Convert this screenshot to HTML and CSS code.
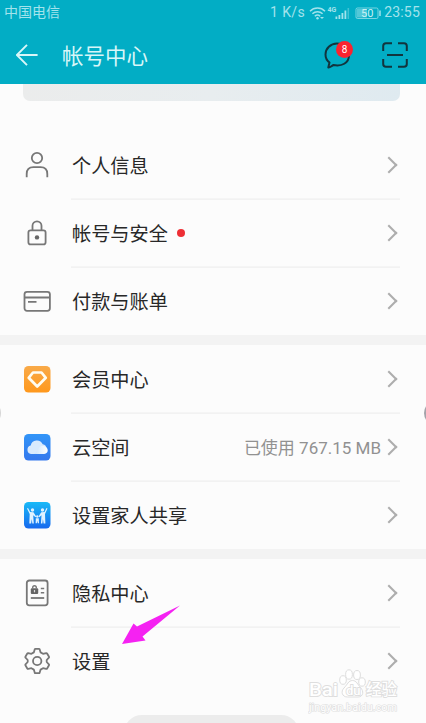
FILE: index.html
```
<!DOCTYPE html>
<html lang="zh-CN">

<head>
    <meta charset="UTF-8">
    <meta name="viewport" content="width=device-width, initial-scale=1.0">
    <title>帐号中心</title>
    <link rel="stylesheet" href="styles.css">
</head>

<body>
    <div class="phone">
        <header class="header">
            <div class="status-bar">
                <span class="carrier">中国电信</span>
                <span class="speed">1 K/s</span>
                <svg class="status-icons" width="74" height="16" viewBox="0 0 74 16">
                    <g fill="none" stroke="currentColor" stroke-width="1.5">
                        <path d="M1 6.2a10.5 10.5 0 0 1 15 0M3.4 8.8a7.3 7.3 0 0 1 10.2 0M5.8 11.3a4 4 0 0 1 5.4 0" />
                    </g>
                    <circle cx="8.5" cy="13.3" r="1.2" fill="currentColor" />
                    <path d="M11 12l2 2 2-2z" fill="currentColor" />
                    <text class="net" x="18.500" y="6.5">4G</text>
                    <path d="M26.500 14v-2.500h1.800V14zM29.500 14V10h1.800v4zM32.500 14V8h1.800v6zM35.500 14V5.500h1.800V14z" fill="currentColor" />
                    <path d="M38.500 14V3h1.600v11z" fill="currentColor" opacity=".4" />
                    <rect x="47" y="3" width="22" height="10.5" rx="1.5" fill="none" stroke="currentColor" opacity=".75" />
                    <rect x="48" y="4" width="10" height="8.5" fill="currentColor" opacity=".5" />
                    <path d="M71 5.5v5.5" stroke="currentColor" stroke-width="1.5" />
                    <text class="battery" x="52" y="12">50</text>
                </svg>
                <span class="time">23:55</span>
            </div>
            <div class="title-bar">
                <svg class="back" width="22" height="22" viewBox="0 0 22 22">
                    <path d="M11 .8L.9 11 11 21.2M1 11h20.6" />
                </svg>
                <h1>帐号中心</h1>
                <div class="messages">
                    <svg width="28" height="28" viewBox="0 0 28 28">
                        <path d="M10.500 24C18.500 25.500 26 22.500 26 14 26 7.500 20.500 2.500 14 2.500S2.500 7.500 2.500 13.500c0 3.600 1.500 6.200 4 8L5.300 26.500c2.200.2 3.200-1.800 5.200-2.500z" />
                    </svg>
                    <span class="badge">8</span>
                </div>
                <svg class="scan" width="26" height="26" viewBox="0 0 26 26">
                    <path d="M1.200 9V4q0-2.800 2.800-2.800H10M16 1.200h6q2.800 0 2.800 2.800v5M24.800 17v5q0 2.800-2.800 2.800H16M10 24.800H4Q1.200 24.800 1.200 22v-5M5 13h16" />
                </svg>
            </div>
        </header>

        <main class="content">
            <div class="card"></div>

            <section class="group">
                <a class="row">
                    <svg class="icon" width="28" height="28" viewBox="0 0 28 28">
                        <circle cx="14" cy="7" r="5.200" />
                        <path d="M3.700 26.200v-3.200q0-6.800 6.800-6.800h7q6.800 0 6.800 6.800v3.200" />
                    </svg>
                    <span class="row-body"><span class="label">个人信息</span><i class="arrow"></i></span>
                </a>
                <a class="row">
                    <svg class="icon" width="28" height="28" viewBox="0 0 28 28">
                        <rect x="5.400" y="11.400" width="17.200" height="14" rx="2.200" />
                        <path d="M9.500 11.400V6.800a4.500 4.500 0 0 1 9 0v4.600" />
                        <circle class="solid" cx="14" cy="18.400" r="2.200" />
                    </svg>
                    <span class="row-body"><span class="label">帐号与安全</span><i class="dot"></i><i class="arrow"></i></span>
                </a>
                <a class="row">
                    <svg class="icon" width="28" height="28" viewBox="0 0 28 28">
                        <rect x="1.500" y="4.800" width="25.400" height="19" rx="2.500" />
                        <path d="M1.500 10.500h25.400M5 14.800h8.500" />
                    </svg>
                    <span class="row-body"><span class="label">付款与账单</span><i class="arrow"></i></span>
                </a>
            </section>

            <section class="group">
                <a class="row">
                    <svg class="app-icon" width="28" height="28" viewBox="0 0 28 28">
                        <defs>
                            <linearGradient id="orange" x1="0" y1="0" x2="0" y2="1">
                                <stop offset="0" stop-color="#f9aa49" />
                                <stop offset="1" stop-color="#ff981c" />
                            </linearGradient>
                        </defs>
                        <rect x="1" y="1" width="26.500" height="26.500" rx="4.500" fill="url(#orange)" />
                        <path d="M10 7.500h8.500l4.300 5.300-8.600 8.700-8.500-8.700z" fill="none" stroke="#fffdf2" stroke-width="2.700" stroke-linejoin="round" />
                    </svg>
                    <span class="row-body"><span class="label">会员中心</span><i class="arrow"></i></span>
                </a>
                <a class="row">
                    <svg class="app-icon" width="28" height="28" viewBox="0 0 28 28">
                        <defs>
                            <linearGradient id="blue" x1="0" y1="0" x2="0" y2="1">
                                <stop offset="0" stop-color="#3295f8" />
                                <stop offset="1" stop-color="#3478ed" />
                            </linearGradient>
                            <linearGradient id="cloud" x1="0" y1="0" x2="1" y2="0">
                                <stop offset="0" stop-color="#c9e2fc" />
                                <stop offset="1" stop-color="#fff" />
                            </linearGradient>
                        </defs>
                        <rect x="1" y="1" width="26.500" height="26.500" rx="4.500" fill="url(#blue)" />
                        <path d="M8 21a4.300 4.300 0 0 1-.3-8.400 6.300 6.300 0 0 1 12-1.300 5 5 0 0 1 .3 9.700z" fill="#d9eafd" />
                        <path d="M10.500 21c3.500-1 3.500-3.800 5-5.800 2.800-3.800 9.200-2 9.200 2.200 0 2-1.700 3.600-4.200 3.600z" fill="url(#cloud)" />
                    </svg>
                    <span class="row-body"><span class="label">云空间</span><span class="value">已使用 767.15 MB</span><i class="arrow"></i></span>
                </a>
                <a class="row">
                    <svg class="app-icon" width="28" height="28" viewBox="0 0 28 28">
                        <defs>
                            <linearGradient id="sky" x1="0" y1="0" x2="0" y2="1">
                                <stop offset="0" stop-color="#19baf7" />
                                <stop offset="1" stop-color="#1769ee" />
                            </linearGradient>
                        </defs>
                        <rect x="1" y="1" width="26.500" height="26.500" rx="4.500" fill="url(#sky)" />
                        <g fill="#e0f2ff">
                            <circle cx="9.500" cy="9" r="1.700" />
                            <circle cx="19.500" cy="9" r="1.700" />
                            <circle cx="14.300" cy="15.500" r="1.200" />
                            <path d="M5 7l2.200 4 3.300.3 2.700 4.200-.7.700-2.300-2 .6 8.300H9.300l-.5-4.500-.7 4.500H6.300l.4-9.500L4 7.500zM24.500 7.500L22 13l.4 9.500h-1.800l-.7-4.500-.5 4.500h-1.500l.6-8.300-2.300 2-.7-.7 2.700-4.200 3.300-.3L23.500 7zM12.800 17.200h3l.2 5h-1.200l-.5-2.500-.5 2.500h-1.200z" />
                        </g>
                    </svg>
                    <span class="row-body"><span class="label">设置家人共享</span><i class="arrow"></i></span>
                </a>
            </section>

            <section class="group">
                <a class="row">
                    <svg class="icon" width="28" height="28" viewBox="0 0 28 28">
                        <rect x="3.800" y="1.500" width="20.800" height="24.800" rx="2.500" />
                        <rect class="solid" x="7.800" y="9.300" width="7.400" height="5.700" rx="1" />
                        <path class="thin" d="M9.700 9.500V8.500a1.800 1.800 0 0 1 3.600 0v1M17.800 9.500h3.400M17.800 13.800h3.400" />
                        <path d="M7.800 19h13.400" />
                        <path class="keyhole" d="M11.500 11v2.300" />
                    </svg>
                    <span class="row-body"><span class="label">隐私中心</span><i class="arrow"></i></span>
                </a>
                <a class="row">
                    <svg class="icon" width="28" height="28" viewBox="0 0 28 28">
                        <circle cx="14.200" cy="14" r="4.200" />
                        <path d="M12.500 1.800h3.400q.6 0 .8.600l.9 3 2.400 1.400 3.200-.7q.6-.1.900.4l1.900 3.200q.3.500-.1 1L23.700 13v2l2.200 2.300q.4.500.1 1l-1.900 3.200q-.3.500-.9.400l-3.200-.7-2.400 1.400-.9 3q-.2.600-.8.600h-3.400q-.6 0-.8-.6l-.9-3-2.400-1.400-3.200.7q-.6.100-.9-.4l-1.900-3.200q-.3-.5.100-1L4.700 15v-2l-2.200-2.300q-.4-.5-.1-1l1.900-3.200q.3-.5.900-.4l3.200.7 2.400-1.400.9-3q.2-.6.800-.6z" />
                    </svg>
                    <span class="row-body"><span class="label">设置</span><i class="arrow"></i></span>
                </a>
            </section>
        </main>

        <svg class="pointer" width="60" height="42" viewBox="0 0 60 42">
            <path d="M59 1.500L16 22.500 12.500 19.500 1 40 24.500 36.500l-3-4z" />
        </svg>

        <div class="edge edge-left"></div>
        <div class="edge edge-right"></div>
        <div class="toast"></div>

        <svg class="watermark" width="94" height="48" viewBox="0 0 94 48">
            <text class="brand" x="1" y="28" textLength="29" lengthAdjust="spacingAndGlyphs">Bai</text>
            <ellipse cx="35" cy="12" rx="3.300" ry="4.300" />
            <ellipse cx="41" cy="6.500" rx="3.400" ry="4.700" />
            <ellipse cx="49" cy="7" rx="3.400" ry="4.500" />
            <ellipse cx="54" cy="14" rx="3.300" ry="4.200" />
            <path d="M44.500 12.500c4 0 5 4 8 7 3.500 3.500 3 9.500-2.500 9.500H39.500c-5.500 0-7-5.500-3.500-9 3.500-3.500 4.500-7.500 8.500-7.500z" />
            <text class="du" x="38" y="26.500">du</text>
            <text class="brand-cn" x="58" y="27">经验</text>
            <text class="site" x="1" y="42.500" textLength="88" lengthAdjust="spacingAndGlyphs">jingyan.baidu.com</text>
        </svg>
    </div>
</body>

</html>
```
FILE: styles.css
```
body {
    margin: 0;
    font-family: Roboto, "Noto Sans CJK SC", sans-serif;
    background-color: #fcfcfc;
}

.phone {
    position: relative;
    height: 723px;
    overflow: hidden;
    background-color: #fcfcfc;
}

.header {
    height: 84px;
    background-color: #02adc5;
}

.status-bar {
    display: flex;
    align-items: center;
    height: 25px;
    padding: 0 6px 0 4px;
    box-sizing: border-box;
    color: #a2e3ec;
    font-size: 14px;
    line-height: 25px;
}

.carrier {
    flex: 1;
}

.speed {
    margin-right: 4px;
    letter-spacing: 0.4px;
}

.status-icons {
    margin-right: 1px;
}

.time {
    letter-spacing: 0.2px;
}

.net {
    font-size: 7px;
    font-weight: bold;
    fill: currentColor;
}

.battery {
    font-size: 11px;
    fill: #c8f0f4;
}

.title-bar {
    display: flex;
    align-items: center;
    height: 60px;
    padding: 0 18px 0 16px;
}

.back {
    fill: none;
    stroke: #d8f6f8;
    stroke-width: 1.9;
}

h1 {
    flex: 1;
    margin: 0 0 0 24px;
    padding-top: 4px;
    color: #d8f6f8;
    font-size: 21.5px;
    font-weight: normal;
    line-height: 32px;
}

.messages {
    position: relative;
    height: 28px;
    margin-right: 31px;
}

.messages svg,
.scan {
    fill: none;
    stroke: #12343d;
    stroke-width: 2;
    stroke-linejoin: round;
}

.badge {
    position: absolute;
    top: 0;
    right: -2px;
    width: 17px;
    height: 17px;
    border-radius: 50%;
    background-color: #f9232f;
    color: #fff;
    font-size: 10px;
    line-height: 17px;
    text-align: center;
}

.card {
    height: 17px;
    margin: 0 26px 30px 23px;
    border-radius: 0 0 7px 7px;
    background: linear-gradient(to right, #ebecec, #e8edef 50%, #dfeaf0);
}

.group + .group {
    border-top: 10px solid #f3f3f3;
}

.row {
    display: flex;
    align-items: center;
    height: 68px;
    padding: 0 26px 0 23px;
}

.icon {
    fill: none;
    stroke: #777;
    stroke-width: 1.8;
    stroke-linejoin: round;
}

.icon .solid {
    fill: #666;
    stroke: none;
}

.icon .thin {
    stroke-width: 1.4;
}

.icon .keyhole {
    stroke: #ddd;
    stroke-width: 1.2;
}

.row-body {
    display: flex;
    flex: 1;
    align-items: center;
    height: 68px;
    margin-left: 20px;
    box-sizing: border-box;
}

.row:not(:last-child) .row-body {
    box-shadow: 0 1px #f2f2f2, inset 0 -1px #f5f5f5;
}

.label {
    padding: 4px 0 0 1px;
    color: #282828;
    font-size: 19.2px;
    line-height: 28px;
}

.value {
    margin-left: auto;
    padding-bottom: 1px;
    color: #919191;
    font-size: 17px;
}

.dot {
    width: 8px;
    height: 8px;
    margin-left: 9px;
    border-radius: 50%;
    background-color: #ee2f35;
}

.arrow {
    width: 10px;
    height: 10px;
    margin: 0 5px 0 auto;
    border: solid #adadad;
    border-width: 2px 2px 0 0;
    transform: rotate(45deg);
}

.value + .arrow {
    margin-left: 2px;
}

.pointer {
    position: absolute;
    top: 604px;
    left: 121px;
    fill: #f522f2;
}

.edge {
    position: absolute;
    width: 24px;
    height: 24px;
    border-radius: 50%;
}

.edge-left {
    top: 401px;
    left: -23px;
    background-color: #d5d5d5;
}

.edge-right {
    top: 401px;
    right: -22px;
    background-color: #a4a3aa;
}

.toast {
    position: absolute;
    top: 715px;
    left: 124px;
    width: 175px;
    height: 36px;
    border-radius: 18px;
    background-color: #ececec;
}

.watermark {
    position: absolute;
    top: 668px;
    left: 308px;
    fill: #fff;
    stroke: #dedede;
    stroke-width: 1;
}

.watermark text {
    paint-order: stroke;
    stroke-width: 1.8;
}

.brand {
    font-size: 19px;
    font-weight: 500;
}

.du {
    font-size: 13px;
    font-weight: 500;
}

.brand-cn {
    font-size: 15.5px;
    font-weight: 500;
}

.watermark .site {
    font-size: 10px;
    stroke-width: 1.2;
}
```
